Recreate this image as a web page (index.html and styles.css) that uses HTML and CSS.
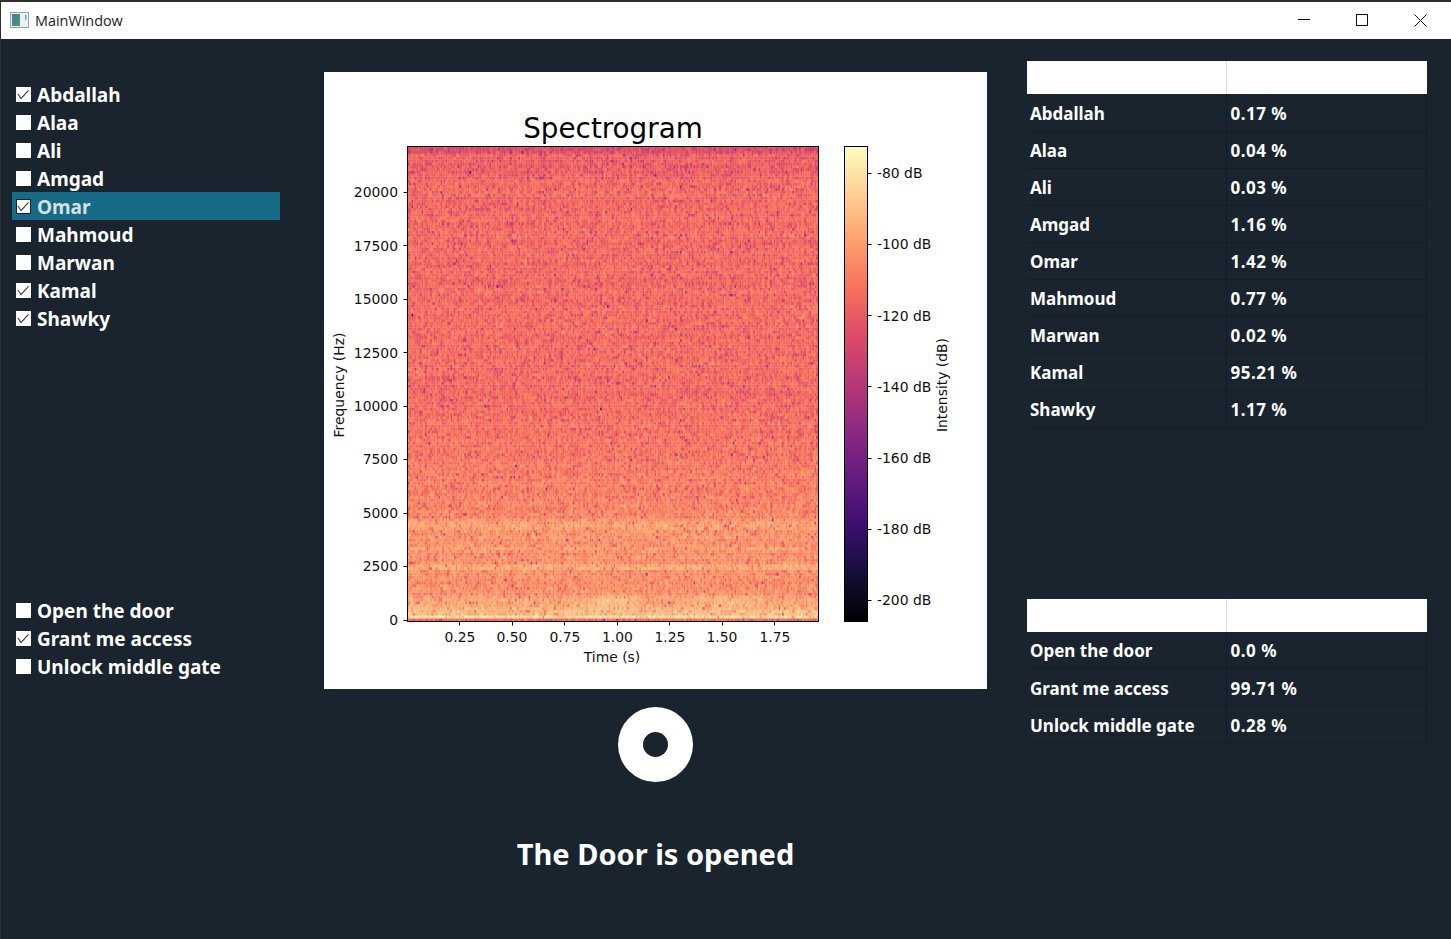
FILE: index.html
```html
<!DOCTYPE html>
<html lang="en">
<head>
<meta charset="utf-8">
<title>MainWindow</title>
<link rel="stylesheet" href="styles.css">
</head>
<body>
<div class="window">
  <header class="titlebar">
    <svg class="app-icon" width="19" height="16" viewBox="0 0 19 16">
      <defs><linearGradient id="pane" x1="0" y1="0" x2="1" y2="1"><stop offset="0" stop-color="#3f7f9a"/><stop offset="1" stop-color="#4f9a6e"/></linearGradient></defs>
      <rect x="0.5" y="0.5" width="18" height="15" fill="#eef1f3" stroke="#9ba3a8"/>
      <rect x="2" y="2" width="8" height="12" fill="url(#pane)"/>
      <rect x="15" y="3" width="1.5" height="5" fill="#6fa8a0"/>
    </svg>
    <span class="app-title">MainWindow</span>
    <div class="win-controls">
      <svg class="win-btn" width="58" height="39" viewBox="0 0 58 39"><path d="M23 19.5H35" stroke="#111" fill="none"/></svg>
      <svg class="win-btn" width="58" height="39" viewBox="0 0 58 39"><rect x="23.5" y="14.5" width="11" height="11" stroke="#111" fill="none"/></svg>
      <svg class="win-btn" width="58" height="39" viewBox="0 0 58 39"><path d="M23.500 14.500L35.500 26.500M35.500 14.500L23.500 26.500" stroke="#111" fill="none"/></svg>
    </div>
  </header>
  <main class="content">
    <section class="col-left">
      <ul class="checks">
        <li class="check-row"><span class="box"><svg viewBox="0 0 15 15"><path d="M2 7L5 11.5L12.6 3.4"/></svg></span><span class="check-label">Abdallah</span></li>
        <li class="check-row"><span class="box"></span><span class="check-label">Alaa</span></li>
        <li class="check-row"><span class="box"></span><span class="check-label">Ali</span></li>
        <li class="check-row"><span class="box"></span><span class="check-label">Amgad</span></li>
        <li class="check-row selected"><span class="box"><svg viewBox="0 0 15 15"><path d="M2 7L5 11.5L12.6 3.4"/></svg></span><span class="check-label">Omar</span></li>
        <li class="check-row"><span class="box"></span><span class="check-label">Mahmoud</span></li>
        <li class="check-row"><span class="box"></span><span class="check-label">Marwan</span></li>
        <li class="check-row"><span class="box"><svg viewBox="0 0 15 15"><path d="M2 7L5 11.5L12.6 3.4"/></svg></span><span class="check-label">Kamal</span></li>
        <li class="check-row"><span class="box"><svg viewBox="0 0 15 15"><path d="M2 7L5 11.5L12.6 3.4"/></svg></span><span class="check-label">Shawky</span></li>
      </ul>
      <ul class="checks checks-phrases">
        <li class="check-row"><span class="box"></span><span class="check-label">Open the door</span></li>
        <li class="check-row"><span class="box"><svg viewBox="0 0 15 15"><path d="M2 7L5 11.5L12.6 3.4"/></svg></span><span class="check-label">Grant me access</span></li>
        <li class="check-row"><span class="box"></span><span class="check-label">Unlock middle gate</span></li>
      </ul>
    </section>

    <section class="col-center">
      <div class="plot">
        <svg class="plot-svg" width="663" height="617" viewBox="324 72 663 617">
          <defs>
            <linearGradient id="magma" x1="0" y1="1" x2="0" y2="0">
              <stop offset="0" stop-color="#000004"/><stop offset="0.1" stop-color="#140e36"/>
              <stop offset="0.2" stop-color="#3b0f70"/><stop offset="0.3" stop-color="#641a80"/>
              <stop offset="0.4" stop-color="#8c2981"/><stop offset="0.5" stop-color="#b73779"/>
              <stop offset="0.6" stop-color="#de4968"/><stop offset="0.7" stop-color="#f7705c"/>
              <stop offset="0.8" stop-color="#fe9f6d"/><stop offset="0.9" stop-color="#fecf92"/>
              <stop offset="1" stop-color="#fcfdbf"/>
            </linearGradient>
          </defs>
          <text class="t-title" x="613" y="138">Spectrogram</text>
          <rect class="frame" x="407.500" y="146.500" width="411" height="475"/>
          <rect x="844" y="146.500" width="23.500" height="475" fill="url(#magma)"/>
          <rect class="frame" x="844.500" y="146.500" width="23" height="475"/>
          <path class="ticks" d="M403.500 192.500H407M403.500 245.500H407M403.500 299.500H407M403.500 352.500H407M403.500 406.500H407M403.500 459.500H407M403.500 513.500H407M403.500 566.500H407M403.500 620.500H407"/>
          <path class="ticks" d="M459.500 622V625.500M512.500 622V625.500M564.500 622V625.500M617.500 622V625.500M669.500 622V625.500M722.500 622V625.500M774.500 622V625.500"/>
          <path class="ticks" d="M868 173.500H871.500M868 244.500H871.500M868 315.500H871.500M868 386.500H871.500M868 458.500H871.500M868 529.500H871.500M868 600.500H871.500"/>
          <g class="t-y">
            <text x="398" y="197">20000</text><text x="398" y="250.500">17500</text>
            <text x="398" y="304">15000</text><text x="398" y="357.500">12500</text>
            <text x="398" y="411">10000</text><text x="398" y="464">7500</text>
            <text x="398" y="518">5000</text><text x="398" y="571">2500</text>
            <text x="398" y="625">0</text>
          </g>
          <g class="t-x">
            <text x="460" y="642">0.25</text><text x="512" y="642">0.50</text>
            <text x="565" y="642">0.75</text><text x="617.500" y="642">1.00</text>
            <text x="670" y="642">1.25</text><text x="722" y="642">1.50</text>
            <text x="775" y="642">1.75</text>
            <text x="612" y="662">Time (s)</text>
          </g>
          <g class="t-cb">
            <text x="877" y="178">-80 dB</text><text x="877" y="249">-100 dB</text>
            <text x="877" y="320.500">-120 dB</text><text x="877" y="391.500">-140 dB</text>
            <text x="877" y="463">-160 dB</text><text x="877" y="534">-180 dB</text>
            <text x="877" y="605">-200 dB</text>
          </g>
          <text class="t-rot" transform="translate(344 385) rotate(-90)">Frequency (Hz)</text>
          <text class="t-rot" transform="translate(947 385) rotate(-90)">Intensity (dB)</text>
        </svg>
        <canvas class="heatmap" id="heatmap" width="410" height="474"></canvas>
      </div>
      <div class="record"><span class="record-hole"></span></div>
      <h1 class="status">The Door is opened</h1>
    </section>

    <section class="col-right">
      <table class="scores">
        <thead><tr><th></th><th></th></tr></thead>
        <tbody>
          <tr><td>Abdallah</td><td>0.17 %</td></tr>
          <tr><td>Alaa</td><td>0.04 %</td></tr>
          <tr><td>Ali</td><td>0.03 %</td></tr>
          <tr><td>Amgad</td><td>1.16 %</td></tr>
          <tr><td>Omar</td><td>1.42 %</td></tr>
          <tr><td>Mahmoud</td><td>0.77 %</td></tr>
          <tr><td>Marwan</td><td>0.02 %</td></tr>
          <tr><td>Kamal</td><td>95.21 %</td></tr>
          <tr><td>Shawky</td><td>1.17 %</td></tr>
        </tbody>
      </table>
      <table class="scores scores-phrases">
        <thead><tr><th></th><th></th></tr></thead>
        <tbody>
          <tr><td>Open the door</td><td>0.0 %</td></tr>
          <tr><td>Grant me access</td><td>99.71 %</td></tr>
          <tr><td>Unlock middle gate</td><td>0.28 %</td></tr>
        </tbody>
      </table>
    </section>
  </main>
</div>
<script src="script.js"></script>
</body>
</html>
```
FILE: styles.css
```css
* { box-sizing: border-box; }
html, body { margin: 0; padding: 0; height: 100%; overflow: hidden; }
body { background: #19242f; }
.window {
  height: 939px;
  display: flex;
  flex-direction: column;
  border-left: 1px solid #2e2e2e;
  border-top: 2px solid #2e2e2e;
  background: #19242f;
  color: #fff;
  font-family: "Noto Sans", "DejaVu Sans", sans-serif;
}
.titlebar {
  height: 37px;
  flex: none;
  background: #fff;
  display: flex;
  align-items: center;
  padding-left: 9px;
}
.app-icon { flex: none; margin-top: -1px; }
.app-title {
  margin-left: 6px;
  color: #1b1b1b;
  font-size: 14.400px;
  font-family: "Open Sans", sans-serif;
}
.win-controls { margin-left: auto; display: flex; margin-right: 2px; }
.win-btn { display: block; margin-top: -2px; }
.content {
  flex: 1;
  display: grid;
  grid-template-columns: 323px 663px 440px;
}
.col-left { padding: 41px 0 0 11px; }
.checks { list-style: none; margin: 0; padding: 0; width: 268px; }
.checks-phrases { margin-top: 264px; }
.check-row {
  height: 28px;
  display: flex;
  align-items: center;
  padding-left: 4px;
  font-size: 19px;
  font-weight: 700;
  white-space: nowrap;
}
.check-label { display: block; padding-top: 2px; }
.box {
  flex: none;
  width: 15px;
  height: 15px;
  margin-right: 6px;
  background: #fff;
  display: block;
}
.box svg { display: block; width: 15px; height: 15px; fill: none; stroke: #444; stroke-width: 1.1; }
.selected { background: #176b87; color: #d9dfe2; }
.selected .box { outline: 1px solid #19242f; outline-offset: -1px; }
.col-center { padding-top: 33px; display: flex; flex-direction: column; align-items: center; }
.plot { position: relative; width: 663px; height: 617px; background: #fff; flex: none; }
.plot-svg { display: block; }
.heatmap { position: absolute; left: 84px; top: 75px; width: 410px; height: 474px; }
.frame { fill: none; stroke: #000; stroke-width: 1; }
.ticks { fill: none; stroke: #000; stroke-width: 1; }
.plot-svg text { font-family: "DejaVu Sans", sans-serif; font-size: 13.900px; fill: #111; }
.plot-svg .t-title { font-size: 27.800px; text-anchor: middle; fill: #000; }
.t-y text { text-anchor: end; }
.t-x text { text-anchor: middle; }
.t-rot { text-anchor: middle; }
.record {
  width: 75px; height: 75px; margin-top: 18px; border-radius: 50%;
  background: #fff; display: flex; align-items: center; justify-content: center; flex: none;
}
.record-hole { width: 25px; height: 25px; border-radius: 50%; background: #19242f; display: block; }
.status { margin: 49px 0 0; font-size: 29px; line-height: 46px; font-weight: 700; white-space: nowrap; }
.col-right { padding: 22px 0 0 40px; }
.scores { border-collapse: collapse; table-layout: fixed; width: 400px; font-size: 17px; }
.scores-phrases { margin-top: 171px; }
.scores th { height: 33px; background: #fff; padding: 0; }
.scores th:first-child { width: 199px; border-right: 1px solid #e0e0e0; }
.scores td {
  height: 37px;
  padding: 2px 0 0 3px;
  font-weight: 700;
  border-right: 1px solid #141c25;
  border-bottom: 1px solid #141c25;
  white-space: nowrap;
}
.scores td + td { letter-spacing: 0.5px; padding-left: 4px; }
```
FILE: script.js
```js
(function () {
  var stops = [[0,0,4],[20,14,54],[59,15,112],[100,26,128],[140,41,129],[183,55,121],[222,73,104],[247,112,92],[254,159,109],[254,207,146],[252,253,191]];
  function color(t) {
    t = Math.max(0, Math.min(0.999, t)) * 10;
    var i = Math.floor(t), f = t - i, a = stops[i], b = stops[i + 1];
    return "rgb(" + Math.round(a[0] + (b[0] - a[0]) * f) + "," + Math.round(a[1] + (b[1] - a[1]) * f) + "," + Math.round(a[2] + (b[2] - a[2]) * f) + ")";
  }
  var seed = 12345;
  function rnd() { seed = (seed * 1664525 + 1013904223) >>> 0; return (seed + 0.5) / 4294967296; }
  function noise() { return 10 * Math.log10(-Math.log(rnd())) + 2.5; }
  function base(y) {
    var f = (1 - y / 474) * 22050;
    var m;
    if (f > 21700) m = 0.60;
    else if (f > 20500) m = 0.65;
    else if (f > 10000) m = 0.672 + 0.006 * (20500 - f) / 10500;
    else if (f > 4800) m = 0.678 + 0.06 * (10000 - f) / 5200;
    else m = 0.765 - 0.015 * (4800 - f) / 4800;
    if (f < 4700 && f > 4300) m = 0.80;
    if (f < 3500 && f > 3250) m = 0.80;
    if (f < 2700 && f > 2350) m = 0.82;
    if (f < 1200) m = 0.78 + 0.10 * (1200 - f) / 1200;
    if (f < 320 && f > 180) m = 0.92;
    if (f < 110) m = 0.66;
    return m;
  }
  var cv = document.getElementById("heatmap"), ctx = cv.getContext("2d");
  var cw = 1.7, ch = 2.85, cols = Math.ceil(410 / cw), rows = Math.ceil(474 / ch);
  for (var r = 0; r < rows; r++) {
    var y = 474 - (r + 1) * ch;
    var rowGain = noise() * 0.001;
    for (var c = 0; c < cols; c++) {
      var x = c * cw;
      var m = base(y + ch / 2) + rowGain;
      var a = Math.exp(-Math.pow((x - 205) / 22, 2)) + Math.exp(-Math.pow((x - 325) / 28, 2));
      m += 0.06 * a * Math.exp(-Math.pow((y - 452) / 6, 2));
      ctx.fillStyle = color(m + noise() * 0.0082);
      ctx.fillRect(x, y, cw + 0.3, ch + 0.3);
    }
  }
})();
```
